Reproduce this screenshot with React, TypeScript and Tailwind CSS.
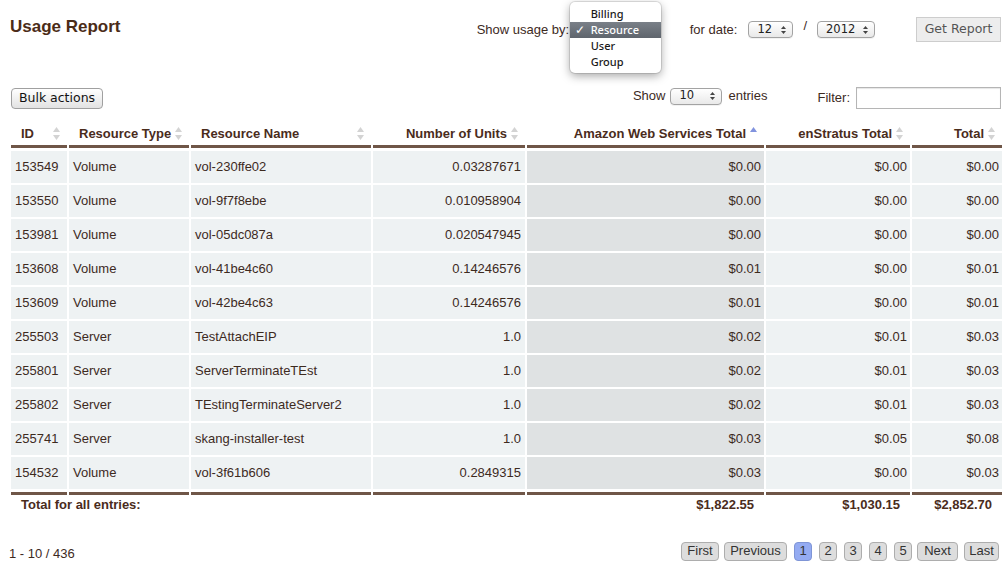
import React from 'react';

type Row = [string, string, string, string, string, string, string];

const rows: Row[] = [
  ['153549', 'Volume', 'vol-230ffe02', '0.03287671', '$0.00', '$0.00', '$0.00'],
  ['153550', 'Volume', 'vol-9f7f8ebe', '0.010958904', '$0.00', '$0.00', '$0.00'],
  ['153981', 'Volume', 'vol-05dc087a', '0.020547945', '$0.00', '$0.00', '$0.00'],
  ['153608', 'Volume', 'vol-41be4c60', '0.14246576', '$0.01', '$0.00', '$0.01'],
  ['153609', 'Volume', 'vol-42be4c63', '0.14246576', '$0.01', '$0.00', '$0.01'],
  ['255503', 'Server', 'TestAttachEIP', '1.0', '$0.02', '$0.01', '$0.03'],
  ['255801', 'Server', 'ServerTerminateTEst', '1.0', '$0.02', '$0.01', '$0.03'],
  ['255802', 'Server', 'TEstingTerminateServer2', '1.0', '$0.02', '$0.01', '$0.03'],
  ['255741', 'Server', 'skang-installer-test', '1.0', '$0.03', '$0.05', '$0.08'],
  ['154532', 'Volume', 'vol-3f61b606', '0.2849315', '$0.03', '$0.00', '$0.03'],
];

// label, width + left margin
const pages: [string, string][] = [
  ['First', 'w-[38px]'],
  ['Previous', 'ml-[5px] w-[63px]'],
  ['1', 'ml-[7px] w-[18px]'],
  ['2', 'ml-[7px] w-[18px]'],
  ['3', 'ml-[7px] w-[18px]'],
  ['4', 'ml-[7px] w-[18px]'],
  ['5', 'ml-[7px] w-[18px]'],
  ['Next', 'ml-[5px] w-[41px]'],
  ['Last', 'ml-[6px] w-[35px]'],
];

const cols = 'grid grid-cols-[56px_120px_180px_152px_237px_144px_90px] gap-x-[2px]';

function SortIcon({ active }: { active?: boolean }) {
  return (
    <svg width="9" height="15" viewBox="0 0 9 15" className="shrink-0">
      <path d="M4.5 1 L8 6 H1 Z" fill={active ? '#8193de' : '#d3d3d3'} />
      {!active && <path d="M4.5 14 L8 9 H1 Z" fill="#d3d3d3" />}
    </svg>
  );
}

function Updown() {
  return (
    <svg width="5" height="8" viewBox="0 0 5 8">
      <path d="M2.5 0 L5 3 H0 Z" fill="#444" />
      <path d="M2.5 8 L5 5 H0 Z" fill="#444" />
    </svg>
  );
}

function Select({ value, className }: { value: string; className: string }) {
  return (
    <div className={`flex h-[17px] items-center justify-between rounded-[4px] border border-[#a3a3a3] bg-gradient-to-b from-white to-[#e9e9e9] pl-[8px] pr-[6px] font-['DejaVu_Sans',sans-serif] text-[11.5px] text-[#222] shadow-[0_1px_0_rgba(0,0,0,0.05)] ${className}`}>
      <span>{value}</span>
      <Updown />
    </div>
  );
}

function HeadCell({ label, right, active }: { label: string; right?: boolean; active?: boolean }) {
  return (
    <div className={`flex h-[27px] items-center border-b-[3px] border-[#6f5647] pr-[6px] pt-[1px] ${right ? 'justify-end' : 'pl-[10px]'}`}>
      <span className="mr-[3px] whitespace-nowrap">{label}</span>
      <span className={right ? '' : 'ml-auto'}><SortIcon active={active} /></span>
    </div>
  );
}

export default function App() {
  return (
    <div className="h-[564px] w-[1008px] overflow-hidden bg-white font-['Liberation_Sans',Arial,sans-serif] text-[13px] text-[#3d2a1e]">
      <div className="flex items-start pl-[10px] pr-[7px]">
        <h1 className="mt-[17px] text-[17px] font-bold leading-[20px] text-[#4b2c18]">Usage Report</h1>
        <div className="ml-auto mt-[17px] flex h-[25px] items-center">
          <span className="w-[93px] overflow-hidden whitespace-nowrap">Show usage by:</span>
          <div className="relative h-full w-[120px]">
            <div className="absolute left-0 top-[-15px] z-10 w-[91px] rounded-[5px] bg-white pb-[3px] pt-[4px] font-['Noto_Sans',sans-serif] text-[11px] font-medium leading-[16px] text-[#1a1a1a] shadow-[0_3px_10px_rgba(0,0,0,0.35)] ring-1 ring-black/10">
              <div className="pl-[21px]">Billing</div>
              <div className="flex bg-gradient-to-b from-[#7a8088] to-[#5f656d] text-white">
                <span className="w-[21px] pl-[5px] text-[12px]">✓</span>
                <span>Resource</span>
              </div>
              <div className="pl-[21px]">User</div>
              <div className="pl-[21px]">Group</div>
            </div>
          </div>
          <span>for date:</span>
          <Select value="12" className="ml-[11px] w-[45px]" />
          <span className="ml-[10px] -mt-[8px]">/</span>
          <Select value="2012" className="ml-[10px] w-[58px]" />
          <button className="ml-[41px] h-[25px] w-[85px] border border-[#cdcdcd] bg-[#ededed] font-['DejaVu_Sans',sans-serif] text-[12.5px] text-[#555]">
            Get Report
          </button>
        </div>
      </div>

      <div className="mt-[45px] flex h-[22px] items-center pl-[11px] pr-[7px]">
        <button className="h-[21px] w-[92px] rounded-[4px] border border-[#a0a0a0] bg-gradient-to-b from-white to-[#e2e2e2] font-['DejaVu_Sans',sans-serif] text-[12.5px] text-[#111]">
          Bulk actions
        </button>
        <div className="mb-[4px] ml-auto flex items-center">
          <span>Show</span>
          <Select value="10" className="ml-[5px] w-[52px]" />
          <span className="ml-[6px]">entries</span>
        </div>
        <div className="ml-[50px] flex items-center">
          <span>Filter:</span>
          <div className="ml-[6px] h-[22px] w-[145px] border border-[#b5b5b5] bg-white shadow-[inset_0_1px_1px_rgba(0,0,0,0.1)]" />
        </div>
      </div>

      <div className="mt-[12px] pl-[11px]">
        <div className={`${cols} font-bold text-[#4a2c1c]`}>
          <HeadCell label="ID" />
          <HeadCell label="Resource Type" />
          <HeadCell label="Resource Name" />
          <HeadCell label="Number of Units" right />
          <HeadCell label="Amazon Web Services Total" right active />
          <HeadCell label="enStratus Total" right />
          <HeadCell label="Total" right />
        </div>

        <div className="mt-[3px] flex flex-col gap-y-[2px]">
          {rows.map((r) => (
            <div key={r[0]} className={`${cols} h-[32px]`}>
              <div className="flex items-center bg-[#eef2f3] pl-[4px]">{r[0]}</div>
              <div className="flex items-center bg-[#eef2f3] pl-[4px]">{r[1]}</div>
              <div className="flex items-center bg-[#eef2f3] pl-[4px]">{r[2]}</div>
              <div className="flex items-center justify-end bg-[#eef2f3] pr-[4px]">{r[3]}</div>
              <div className="flex items-center justify-end bg-[#dfe2e3] pr-[3px]">{r[4]}</div>
              <div className="flex items-center justify-end bg-[#eef2f3] pr-[3px]">{r[5]}</div>
              <div className="flex items-center justify-end bg-[#eef2f3] pr-[3px]">{r[6]}</div>
            </div>
          ))}
        </div>

        <div className={`${cols} mt-[3px] font-bold text-[#4a2c1c]`}>
          <div className="flex h-[23px] items-center whitespace-nowrap border-t-[3px] border-[#6f5647] pl-[10px]">Total for all entries:</div>
          <div className="border-t-[3px] border-[#6f5647]" />
          <div className="border-t-[3px] border-[#6f5647]" />
          <div className="border-t-[3px] border-[#6f5647]" />
          <div className="flex items-center justify-end border-t-[3px] border-[#6f5647] pr-[10px]">$1,822.55</div>
          <div className="flex items-center justify-end border-t-[3px] border-[#6f5647] pr-[10px]">$1,030.15</div>
          <div className="flex items-center justify-end border-t-[3px] border-[#6f5647] pr-[10px]">$2,852.70</div>
        </div>
      </div>

      <div className="mt-[26px] flex h-[20px] items-center pl-[9px] pr-[9px]">
        <span className="mt-[5px]">1 - 10 / 436</span>
        <div className="ml-auto flex items-center text-[#333]">
          {pages.map(([p, size]) => (
            <span
              key={p}
              className={`flex h-[19px] items-center justify-center rounded-[4px] border ${size} ${p === '1' ? 'border-[#7f95d6] bg-[#94abf2]' : 'border-[#adadad] bg-[#dddddd]'}`}
            >
              {p}
            </span>
          ))}
        </div>
      </div>
    </div>
  );
}
